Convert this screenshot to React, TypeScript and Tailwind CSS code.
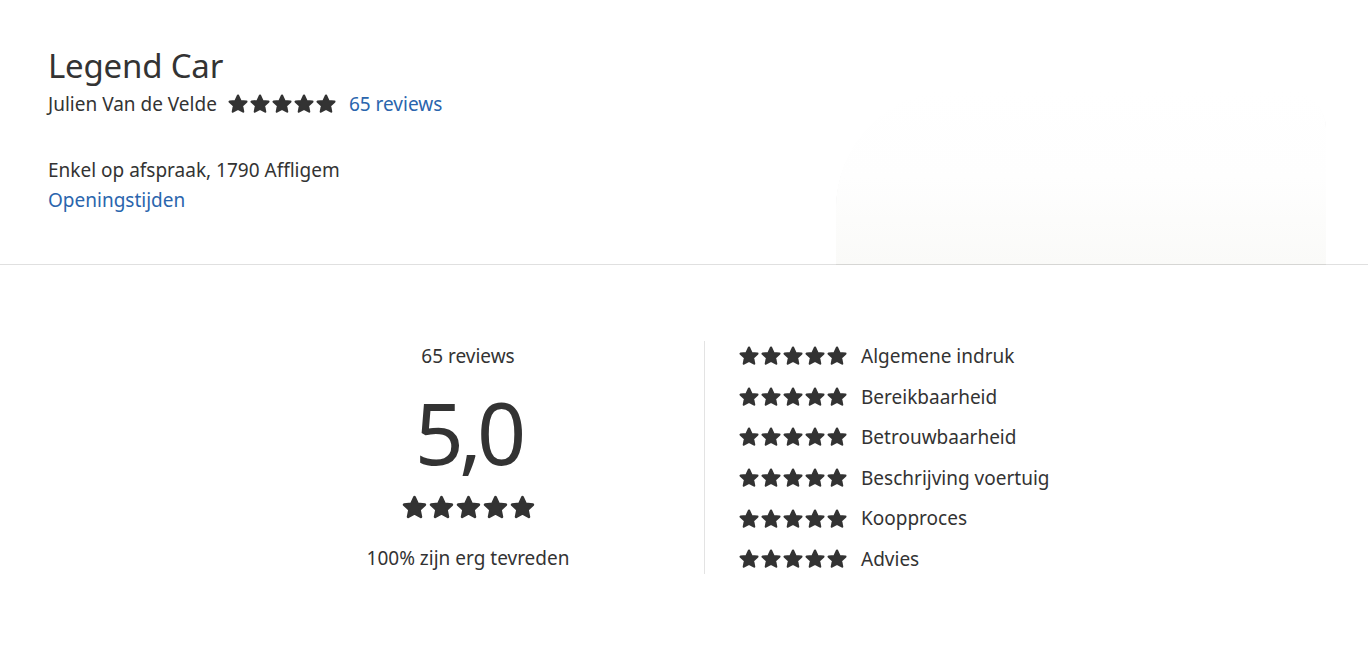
import type { FC } from "react";

const Star: FC<{ size: number }> = ({ size }) => (
  <svg width={size} height={size} viewBox="0 0 24 24" className="shrink-0">
    <path
      d="M12 2.8l2.75 5.9 6.45.78-4.76 4.43 1.24 6.38L12 17.1l-5.68 3.19 1.24-6.38L2.8 9.48l6.45-.78z"
      fill="#333"
      stroke="#333"
      strokeWidth="2.4"
      strokeLinejoin="round"
    />
  </svg>
);

const Stars: FC<{ size: number }> = ({ size }) => (
  <div className="flex items-center">
    {[0, 1, 2, 3, 4].map((i) => (
      <Star key={i} size={size} />
    ))}
  </div>
);

const criteria = [
  "Algemene indruk",
  "Bereikbaarheid",
  "Betrouwbaarheid",
  "Beschrijving voertuig",
  "Koopproces",
  "Advies",
];

export default function App() {
  return (
    <div
      className="min-h-[645px] bg-white text-[#333]"
      style={{ fontFamily: '"Noto Sans", "Open Sans", sans-serif' }}
    >
      <header className="relative h-[265px] border-b border-[#e0e0e0] px-12 pt-[43px]">
        <h1 className="text-[33px] leading-[46px] tracking-[-0.2px]">Legend Car</h1>
        <div className="flex items-center text-[19px] leading-[30px]">
          <span>Julien Van de Velde</span>
          <div className="ml-[10px]">
            <Stars size={22} />
          </div>
          <a className="ml-[12px] text-[#2a65ad]">65 reviews</a>
        </div>
        <p className="mt-[36px] text-[19px] leading-[30px]">Enkel op afspraak, 1790 Affligem</p>
        <a className="block text-[19px] leading-[30px] text-[#2a65ad]">Openingstijden</a>
        <div className="absolute right-[42px] bottom-0 h-[175px] w-[490px] rounded-tl-[120px] rounded-tr-[40px] bg-gradient-to-b from-white via-[#fefefe] to-[#fafaf8] shadow-[0_1px_0_#d6d6d4]" />
      </header>

      <section className="flex justify-center pt-[76px]">
        <div className="flex w-[472px] flex-col items-center">
          <div className="text-[19px] leading-[30px]">65 reviews</div>
          <div className="mt-[13px] text-[86px] leading-[96px] tracking-[-5px]">5,0</div>
          <div className="mt-[14px]">
            <Stars size={27} />
          </div>
          <div className="mt-[22px] text-[19px] leading-[30px]">100% zijn erg tevreden</div>
        </div>
        <div className="h-[233px] w-px bg-[#e3e3e3]" />
        <div className="mt-[-5px] flex w-[431px] flex-col pl-[33px]">
          {criteria.map((c) => (
            <div key={c} className="flex h-[40.6px] items-center">
              <Stars size={22} />
              <span className="ml-[13px] text-[19px]">{c}</span>
            </div>
          ))}
        </div>
      </section>
    </div>
  );
}
